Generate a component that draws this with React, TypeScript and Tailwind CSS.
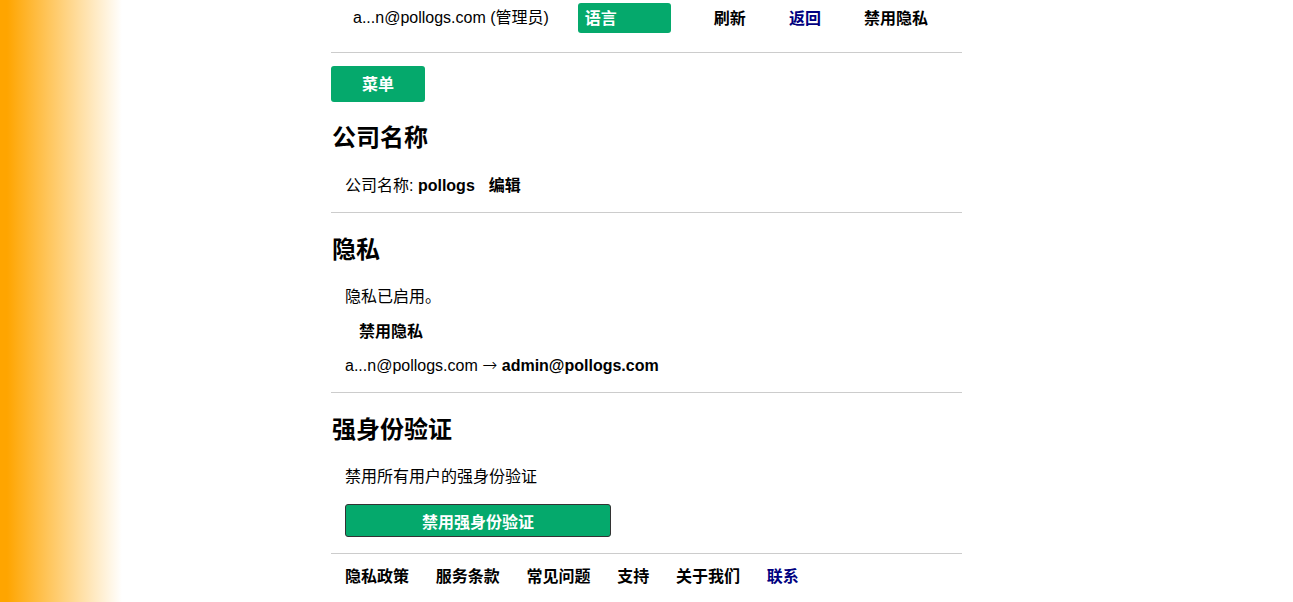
const font = "font-['Liberation_Sans','Noto_Sans_CJK_SC',sans-serif]";

const footerLinks = ['隐私政策', '服务条款', '常见问题', '支持', '关于我们'];

export default function App() {
  return (
    <div
      className={`min-h-[602px] bg-[linear-gradient(to_right,#ffa500_7px,#ffffff_122px)] text-black ${font}`}
    >
      <div className="mx-auto w-[631px] bg-white min-h-[602px]">
        {/* top nav */}
        <nav className="flex items-center pt-[3px] pl-[22px] text-[16px] leading-[24px]">
          <span>a...n@pollogs.com (管理员)</span>
          <span className="ml-[29px] flex h-[30px] w-[93px] items-center rounded-[3px] bg-[#05a96c] px-[7px] pt-px font-bold text-white">
            语言
          </span>
          <a className="ml-[43px] pt-px font-bold">刷新</a>
          <a className="ml-[43px] pt-px font-bold text-[#000080]">返回</a>
          <a className="ml-[43px] pt-px font-bold">禁用隐私</a>
        </nav>
        <hr className="mt-[19px] border-t border-[#cccccc]" />

        <button className="mt-[13px] h-[36px] w-[94px] rounded-[3px] bg-[#05a96c] pt-px text-[16px] font-bold text-white">
          菜单
        </button>

        {/* company name */}
        <h2 className="mt-[22px] pl-px text-[24px] font-bold leading-[28px]">公司名称</h2>
        <p className="mt-[21px] pl-[14px] pt-px text-[16px] leading-[24px]">
          公司名称: <b>pollogs</b>
          <b className="ml-[14px]">编辑</b>
        </p>
        <hr className="mt-[14px] border-t border-[#cccccc]" />

        {/* privacy */}
        <h2 className="mt-[23px] pl-px text-[24px] font-bold leading-[28px]">隐私</h2>
        <p className="mt-[20px] pl-[14px] pt-px text-[16px] leading-[24px]">隐私已启用。</p>
        <p className="mt-[10px] pl-[28px] pt-px text-[16px] font-bold leading-[24px]">禁用隐私</p>
        <p className="mt-[9px] pl-[14px] pt-px text-[16px] leading-[24px]">
          a...n@pollogs.com{' '}
          <span className="font-['DejaVu_Sans',sans-serif] text-[18px] font-extralight leading-none">→</span>{' '}
          <b>admin@pollogs.com</b>
        </p>
        <hr className="mt-[14px] border-t border-[#cccccc]" />

        {/* strong auth */}
        <h2 className="mt-[23px] pl-px text-[24px] font-bold leading-[28px]">强身份验证</h2>
        <p className="mt-[20px] pl-[14px] pt-px text-[16px] leading-[24px]">禁用所有用户的强身份验证</p>
        <div className="mt-[15px] pl-[14px]">
          <button className="h-[33px] w-[266px] rounded-[3px] border border-[#333333] bg-[#05a96c] pt-[4px] text-[16px] font-bold text-white">
            禁用强身份验证
          </button>
        </div>
        <hr className="mt-[16px] border-t border-[#cccccc]" />

        {/* footer */}
        <footer className="mt-[10px] flex gap-[26.75px] pl-[14px] pt-px text-[16px] font-bold leading-[24px]">
          {footerLinks.map((l) => (
            <a key={l}>{l}</a>
          ))}
          <a className="text-[#000080]">联系</a>
        </footer>
      </div>
    </div>
  );
}
